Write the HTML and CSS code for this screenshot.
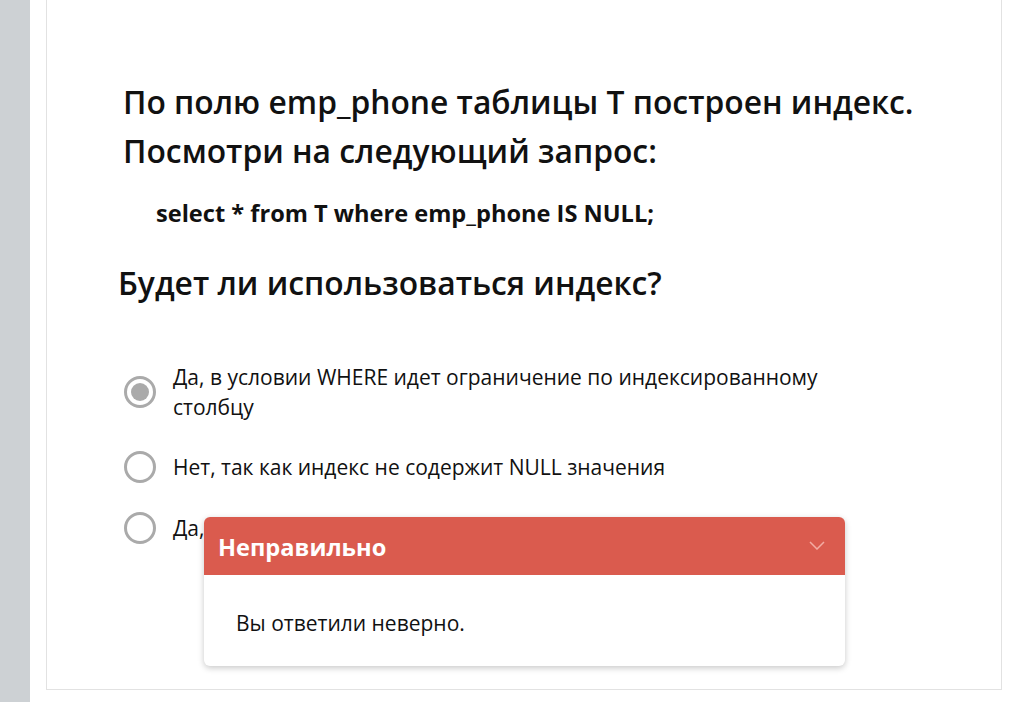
FILE: index.html
```html
<!DOCTYPE html>
<html lang="ru">
<head>
<meta charset="utf-8">
<link rel="stylesheet" href="styles.css">
</head>
<body>
<div class="page">
  <aside class="sidebar"></aside>
  <main class="main">
    <section class="card">
      <h1 class="question">По полю emp_phone таблицы T построен индекс.<br>Посмотри на следующий запрос:</h1>
      <p class="code">select * from T where emp_phone IS NULL;</p>
      <h2 class="ask">Будет ли использоваться индекс?</h2>
      <ul class="options">
        <li class="option">
          <span class="radio checked"></span>
          <span class="label">Да, в условии WHERE идет ограничение по индексированному столбцу</span>
        </li>
        <li class="option">
          <span class="radio"></span>
          <span class="label">Нет, так как индекс не содержит NULL значения</span>
        </li>
        <li class="option">
          <span class="radio"></span>
          <span class="label">Да, так как индекс содержит NULL значения</span>
        </li>
      </ul>
      <div class="toast">
        <div class="toast-head">
          <span class="toast-title">Неправильно</span>
          <svg class="chev" width="16" height="9" viewBox="0 0 16 9"><path d="M1 1 L8 8 L15 1" fill="none" stroke="#f3aca3" stroke-width="1.5"/></svg>
        </div>
        <div class="toast-body">Вы ответили неверно.</div>
      </div>
    </section>
  </main>
</div>
</body>
</html>
```

FILE: styles.css
```css
html, body {
  margin: 0;
  padding: 0;
  background: #ffffff;
}
body {
  font-family: "Open Sans", "Noto Sans", sans-serif;
  color: #111;
}
.page {
  display: flex;
  width: 1010px;
  height: 702px;
  overflow: hidden;
}
.sidebar {
  width: 30px;
  flex: none;
  background: #cdd1d4;
}
.main {
  flex: 1;
  padding-left: 16px;
  padding-right: 8px;
}
.card {
  position: relative;
  margin-top: -1px;
  height: 691px;
  box-sizing: border-box;
  border: 1px solid #e2e2e2;
  padding: 77px 20px 0 76px;
}
.question {
  margin: 0;
  font-size: 31.8px;
  font-weight: 600;
  line-height: 49px;
  color: #111;
  white-space: nowrap;
}
.code {
  margin: 23px 0 0 33px;
  font-size: 23.6px;
  font-weight: 700;
  line-height: 30px;
}
.ask {
  margin: 31px 0 0 -5px;
  font-size: 31.8px;
  font-weight: 600;
  line-height: 48px;
}
.options {
  list-style: none;
  margin: 55px 0 0 1px;
  padding: 0;
  display: flex;
  flex-direction: column;
  gap: 29px;
}
.option {
  display: flex;
  align-items: center;
  gap: 17px;
}
.radio {
  flex: none;
  width: 26px;
  height: 26px;
  border: 3px solid #aaaaaa;
  border-radius: 50%;
  position: relative;
}
.radio.checked::after {
  content: "";
  position: absolute;
  left: 4px;
  top: 4px;
  width: 18px;
  height: 18px;
  border-radius: 50%;
  background: #aaaaaa;
}
.label {
  font-size: 21px;
  line-height: 30px;
  width: 690px;
  color: #111;
}
.toast {
  position: absolute;
  left: 157px;
  top: 517px;
  width: 641px;
  height: 149px;
  background: #fff;
  border-radius: 6px;
  box-shadow: 0 2px 6px rgba(0, 0, 0, 0.22);
  overflow: hidden;
}
.toast-head {
  height: 58px;
  background: #da5b4e;
  display: flex;
  align-items: center;
  justify-content: space-between;
  padding: 0 20px 0 14px;
}
.toast-title {
  color: #fff;
  font-size: 23.6px;
  font-weight: 700;
  margin-top: 2px;
}
.chev {
  margin-top: -2px;
}
.toast-body {
  padding: 33px 32px 0 32px;
  font-size: 21px;
  line-height: 30px;
  color: #111;
}
```
